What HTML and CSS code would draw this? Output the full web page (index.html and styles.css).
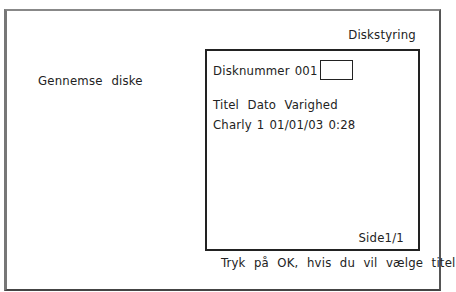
FILE: index.html
```html
<!DOCTYPE html>
<html>
<head>
<meta charset="utf-8">
<link rel="stylesheet" href="styles.css">
</head>
<body>
<div class="frame">
  <div class="title">Diskstyring</div>
  <div class="main">
    <div class="side">
      <div class="label">Gennemse diske</div>
    </div>
    <div class="column">
      <div class="panel">
        <div class="row-num"><span>Disknummer 001</span><span class="input"></span></div>
        <div class="row-head">Titel Dato Varighed</div>
        <div class="row-item">Charly 1 01/01/03 0:28</div>
        <div class="page">Side1/1</div>
      </div>
      <div class="hint">Tryk på OK, hvis du vil vælge titel</div>
    </div>
  </div>
</div>
</body>
</html>
```
FILE: styles.css
```css
html, body {
  margin: 0;
  background: #fff;
}
body {
  font-family: "DejaVu Sans Condensed", sans-serif;
  font-size: 13px;
  line-height: 16px;
  color: #222;
  letter-spacing: 0.2px;
  word-spacing: 1px;
}
.frame {
  margin: 9px 0 0 4px;
  border-left: 3px solid #777;
  border-top: 2px solid #888;
  border-right: 2px solid #555;
  border-bottom: 2px solid #444;
  padding-top: 16px;
  box-sizing: border-box;
  height: 282px;
  width: 437px;
}
.title {
  text-align: right;
  padding-right: 23px;
}
.main {
  display: flex;
  margin-top: 6px;
}
.side {
  width: 198px;
  padding-left: 31px;
  box-sizing: border-box;
}
.label {
  margin-top: 24px;
  white-space: nowrap;
  word-spacing: 5px;
}
.column {
  width: 215px;
}
.panel {
  width: 215px;
  height: 202px;
  border: 2px solid #222;
  box-sizing: border-box;
  padding: 12px 14px 3px 6px;
  display: flex;
  flex-direction: column;
}
.row-num {
  display: flex;
  align-items: flex-start;
  white-space: nowrap;
}
.input {
  display: inline-block;
  width: 33px;
  height: 20px;
  border: 1.5px solid #222;
  box-sizing: border-box;
  margin-left: 2px;
  margin-top: -3px;
}
.row-head {
  margin-top: 17px;
  white-space: nowrap;
  word-spacing: 4.5px;
}
.row-item {
  margin-top: 4px;
  white-space: nowrap;
}
.page {
  margin-top: auto;
  text-align: right;
}
.hint {
  margin-top: 4px;
  margin-left: 16px;
  white-space: nowrap;
  word-spacing: 4.5px;
}
```
